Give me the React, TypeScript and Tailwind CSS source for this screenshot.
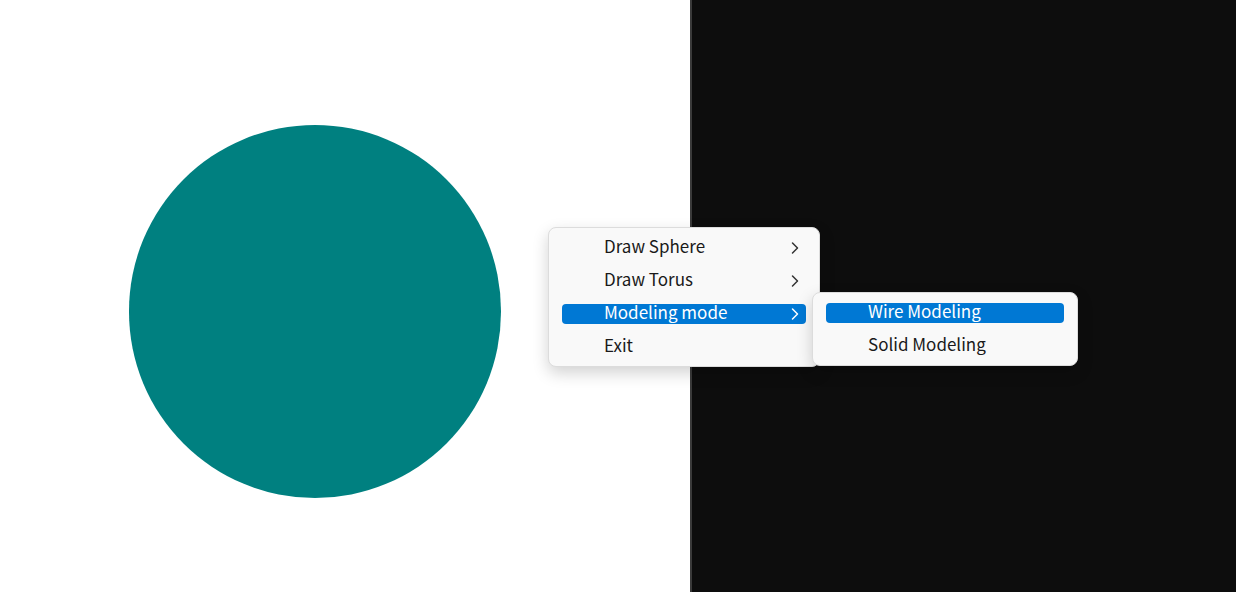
import { ChevronRight } from 'lucide-react';

const items = [
  { label: 'Draw Sphere', sub: true, active: false },
  { label: 'Draw Torus', sub: true, active: false },
  { label: 'Modeling mode', sub: true, active: true },
  { label: 'Exit', sub: false, active: false },
];

const subItems = [
  { label: 'Wire Modeling', active: true },
  { label: 'Solid Modeling', active: false },
];

export default function App() {
  return (
    <div
      className="relative flex h-[592px] w-[1236px] overflow-hidden"
      style={{ fontFamily: '"Noto Sans CJK KR", "Noto Sans", sans-serif' }}
    >
      {/* White canvas with sphere */}
      <div className="w-[690px] bg-white pl-[129px] pt-[125px]">
        <div className="h-[373px] w-[372px] rounded-full bg-[#008080]" />
      </div>

      {/* Dark window */}
      <div className="flex-1 border-l-2 border-[#3a3a3a] bg-[#0d0d0d]" />

      {/* Context menu */}
      <div className="absolute left-[548px] top-[227px] flex items-start">
        <div className="w-[272px] rounded-lg border border-[#dcdcdc] bg-[#f9f9f9] py-[3px] shadow-[0_6px_16px_rgba(0,0,0,0.18)]">
          {items.map((it) => (
            <div key={it.label} className="flex h-[33px] items-center px-[13px]">
              <div
                className={`flex h-[20px] w-full items-center rounded-[4px] pl-[42px] pr-[1px] ${
                  it.active ? 'bg-[#0078d4] text-white' : 'text-[#1a1a1a]'
                }`}
              >
                <span className="flex-1 -translate-y-[2px] text-[17px] leading-none">{it.label}</span>
                {it.sub && (
                  <ChevronRight
                    className={`h-[20px] w-[20px] ${it.active ? 'text-white' : 'text-[#333]'}`}
                    strokeWidth={1.8}
                  />
                )}
              </div>
            </div>
          ))}
        </div>

        <div className="-ml-[8px] mt-[65px] w-[266px] rounded-lg border border-[#dcdcdc] bg-[#f9f9f9] py-[3px] shadow-[0_6px_16px_rgba(0,0,0,0.18)]">
          {subItems.map((it) => (
            <div key={it.label} className="flex h-[33px] items-center px-[13px]">
              <div
                className={`flex h-[20px] w-full items-center rounded-[4px] pl-[42px] ${
                  it.active ? 'bg-[#0078d4] text-white' : 'text-[#1a1a1a]'
                }`}
              >
                <span className="-translate-y-[2px] text-[17px] leading-none">{it.label}</span>
              </div>
            </div>
          ))}
        </div>
      </div>
    </div>
  );
}
